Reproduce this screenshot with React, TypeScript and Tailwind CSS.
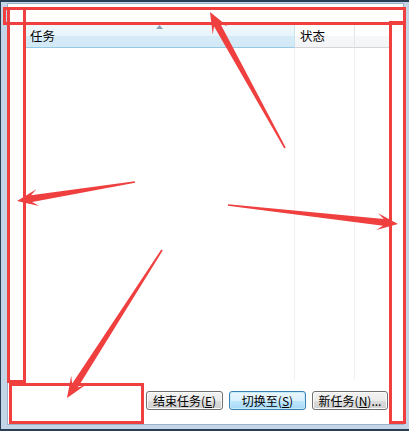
import React from "react";

const RED = "#ef3f3f";

function arrowPoints(x1: number, y1: number, x2: number, y2: number) {
  const dx = x2 - x1;
  const dy = y2 - y1;
  const len = Math.hypot(dx, dy);
  const ux = dx / len;
  const uy = dy / len;
  const nx = -uy;
  const ny = ux;
  const H = 21;
  const W = 8.5;
  const neckD = H * 0.7;
  const bx = x2 - ux * H;
  const by = y2 - uy * H;
  const kx = x2 - ux * neckD;
  const ky = y2 - uy * neckD;
  const pts: [number, number][] = [
    [x1 + nx * 0.8, y1 + ny * 0.8],
    [kx + nx * 3.4, ky + ny * 3.4],
    [bx + nx * W, by + ny * W],
    [x2, y2],
    [bx - nx * W, by - ny * W],
    [kx - nx * 3.4, ky - ny * 3.4],
    [x1 - nx * 0.8, y1 - ny * 0.8],
  ];
  return pts.map((p) => `${p[0].toFixed(1)},${p[1].toFixed(1)}`).join(" ");
}

function Btn({ children, primary }: { children: React.ReactNode; primary?: boolean }) {
  return (
    <div
      className={
        primary
          ? "h-[19px] flex items-center justify-center rounded-[3px] border border-[#3c7fb1] bg-[linear-gradient(#eaf6fd_0%,#d9f0fc_50%,#bee6fd_51%,#a7d9f5_100%)] shadow-[inset_0_0_0_1px_#c6ecfc] text-[12px] text-black"
          : "h-[19px] flex items-center justify-center rounded-[3px] border border-[#707070] bg-[linear-gradient(#f2f2f2_0%,#ebebeb_50%,#dddddd_51%,#cfcfcf_100%)] shadow-[inset_0_0_0_1px_#fcfcfc] text-[12px] text-black"
      }
    >
      {children}
    </div>
  );
}

export default function App() {
  return (
    <div
      className="relative w-[409px] h-[431px] overflow-hidden bg-[#c4d5e8] border-t-2 border-l border-b-2 border-[#2a3e55] flex pt-[1px] pl-[6px] pr-[5px] pb-[4px]"
      style={{ fontFamily: '"Noto Sans CJK SC", "Noto Sans", sans-serif' }}
    >
      <div className="flex-1 bg-white border border-[#9eb2c8] flex flex-col pl-[17px] pt-[20px] pr-[14px]">
        {/* list view */}
        <div className="h-[356px] flex flex-col bg-white">
          <div className="flex h-[24px] text-[12.5px] leading-none text-black">
            <div className="relative w-[270px] flex items-center pl-[5px] pt-[2px] bg-[linear-gradient(#f2f9fd_0%,#e7f4fb_50%,#d6ebf7_51%,#d2e9f6_100%)] border-b border-[#96c9e4] border-r border-r-[#cbe3f1]">
              <span>任务</span>
              <svg className="absolute left-[131px] top-[1px]" width="7" height="4" viewBox="0 0 7 4">
                <polygon points="0,4 3.5,0 7,4" fill="#8aa0b8" />
              </svg>
            </div>
            <div className="w-[60px] flex items-center pl-[5px] pt-[2px] bg-[linear-gradient(#ffffff_0%,#ffffff_50%,#f7f8f9_51%,#f3f4f6_100%)] border-b border-[#d5d5d5] border-r border-r-[#e3e5e8]">
              <span>状态</span>
            </div>
            <div className="flex-1 bg-[linear-gradient(#ffffff_0%,#ffffff_50%,#f7f8f9_51%,#f3f4f6_100%)] border-b border-[#d5d5d5]" />
          </div>
          <div className="flex-1 flex">
            <div className="w-[270px] border-r border-[#eef0f3]" />
            <div className="w-[60px] border-r border-[#eef0f3]" />
            <div className="flex-1" />
          </div>
        </div>
        {/* buttons */}
        <div className="mt-[11px] flex justify-end gap-[6px] pr-[1px]">
          <div className="w-[77px]">
            <Btn>
              结束任务(<span className="underline">E</span>)
            </Btn>
          </div>
          <div className="w-[77px]">
            <Btn primary>
              切换至(<span className="underline">S</span>)
            </Btn>
          </div>
          <div className="w-[76px]">
            <Btn>
              新任务(<span className="underline">N</span>)...
            </Btn>
          </div>
        </div>
      </div>

      {/* annotations */}
      <div className="absolute left-[2px] top-[5px] w-[403px] h-[18px] border-[3px] border-[#ef3f3f] pointer-events-none" />
      <div className="absolute left-[6px] top-[5px] w-[19px] h-[376px] border-[3px] border-[#ef3f3f] pointer-events-none" />
      <div className="absolute left-[388px] top-[19px] w-[17px] h-[403px] border-[3px] border-[#ef3f3f] pointer-events-none" />
      <div className="absolute left-[8px] top-[381px] w-[135px] h-[41px] border-[3px] border-[#ef3f3f] pointer-events-none" />
      <svg
        className="absolute left-[-1px] top-[-2px] pointer-events-none"
        width="409"
        height="431"
        viewBox="0 0 409 431"
      >
        <polygon points={arrowPoints(285, 148, 210, 12)} fill={RED} />
        <polygon points={arrowPoints(135, 182, 17, 201)} fill={RED} />
        <polygon points={arrowPoints(228, 205, 398, 224)} fill={RED} />
        <polygon points={arrowPoints(162, 250, 67, 398)} fill={RED} />
      </svg>
    </div>
  );
}
